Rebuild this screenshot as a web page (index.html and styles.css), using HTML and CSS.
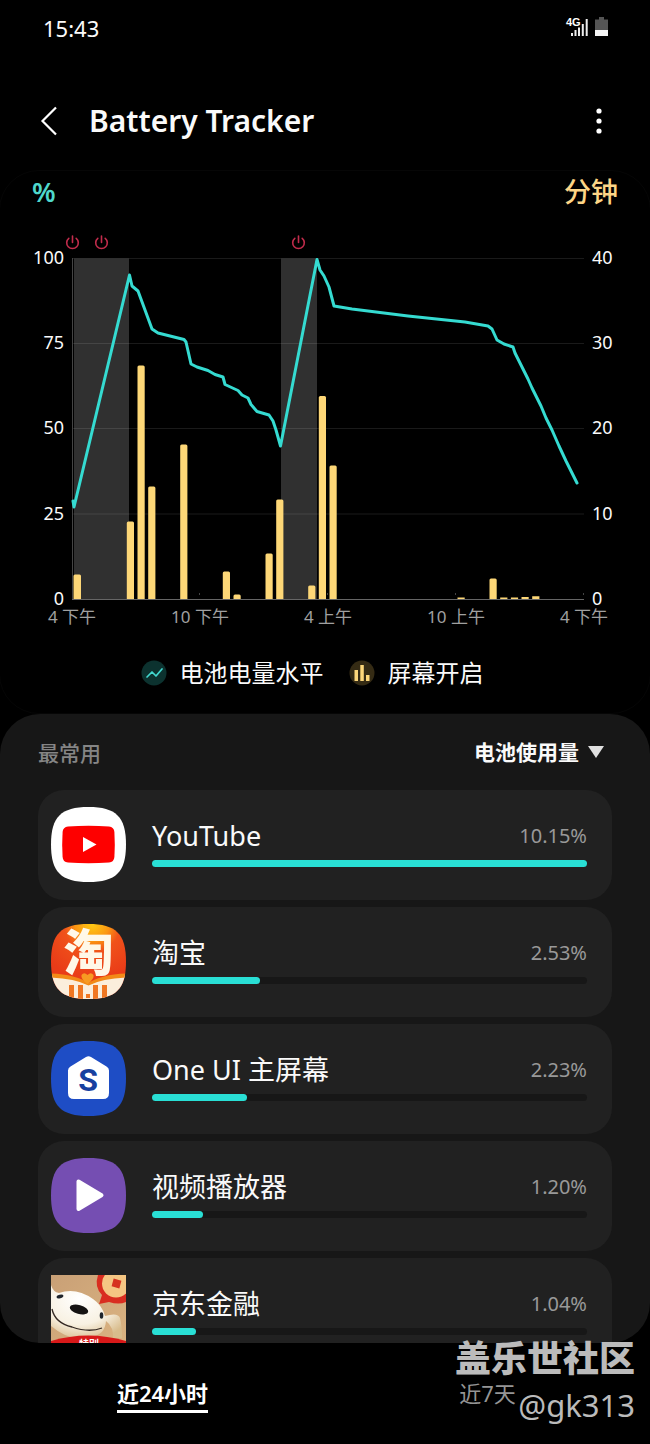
FILE: index.html
```html
<!DOCTYPE html>
<html lang="zh-CN">
<head>
<meta charset="utf-8">
<meta name="viewport" content="width=device-width, initial-scale=1">
<title>Battery Tracker</title>
<link rel="stylesheet" href="styles.css">
</head>
<body>
<div class="screen">
  <div class="status">
    <span>15:43</span>
    <svg class="status-icons" viewBox="0 0 44 24" role="img" aria-label="4G">
      <g fill="#eee"><path d="M6 20h2v-3H6zM9.500 20h2v-6h-2zM13 20h2V11.500h-2zM16.800 20h2V8h-2zM20.700 20h2V3h-2z"/></g>
      <text x="1" y="10" class="net">4G</text>
      <path d="M34 1h5v2.500h4V14H30V3.500h4z" fill="#555"/>
      <path d="M30 14h13v6H30z" fill="#f5f5f5"/>
    </svg>
  </div>

  <header class="header">
    <button class="icon-btn back" aria-label="返回"><svg viewBox="0 0 18 30"><path d="M16 1.500 2.500 15 16 28.500" fill="none" stroke="#fff" stroke-width="2.200"/></svg></button>
    <h1>Battery Tracker</h1>
    <button class="icon-btn more" aria-label="更多选项"><svg viewBox="0 0 6 28"><g fill="#fff"><circle cx="3" cy="4" r="2.600"/><circle cx="3" cy="14" r="2.600"/><circle cx="3" cy="24" r="2.600"/></g></svg></button>
  </header>

  <section class="chart-card">
    <div class="units"><span class="pct">%</span><span class="min">分钟</span></div>
    <svg class="chart" viewBox="0 0 650 410" role="img" aria-label="电池电量水平和屏幕开启">
      <defs>
        <g id="power" fill="none" stroke="#c22c4c" stroke-width="1.600" stroke-linecap="round"><path d="M-3.700-4.200A5.800 5.800 0 1 0 3.700-4.200M0-6.500V0"/></g>
      </defs>
      <path d="M74 38.500h55V379H74zM281 38.500h36V379h-36z" fill="#303030"/>
      <path d="M72 38.500h512M72 123.500h512M72 208.500h512M72 294h512" stroke="#fff" stroke-opacity=".1"/>
      <path d="M72.500 38v342" stroke="#444"/>
      <g class="axis-dots"><path d="M199 373h1v2h-1zM327 373h1v2h-1zM455 373h1v2h-1zM583 373h1v2h-1z"/></g>
      <g class="bars">
        <path d="M73.500 379V356q0-1.500 1.500-1.500h4.500q1.500 0 1.500 1.500v23z"/>
        <path d="M126.800 379V303q0-1.500 1.500-1.500h4.200q1.500 0 1.500 1.500v76z"/>
        <path d="M137.500 379V147q0-1.500 1.500-1.500h4.200q1.500 0 1.500 1.500v232z"/>
        <path d="M148.200 379V268q0-1.500 1.500-1.500h4.200q1.500 0 1.500 1.500v111z"/>
        <path d="M180.200 379V226q0-1.500 1.500-1.500h4.200q1.500 0 1.500 1.500v153z"/>
        <path d="M222.800 379V353q0-1.500 1.500-1.500h4.200q1.500 0 1.500 1.500v26z"/>
        <path d="M233.500 379V376q0-1.500 1.500-1.500h4.200q1.500 0 1.500 1.500v3z"/>
        <path d="M265.500 379V335q0-1.500 1.500-1.500h4.200q1.500 0 1.500 1.500v44z"/>
        <path d="M276.200 379V281q0-1.500 1.500-1.500h4.200q1.500 0 1.500 1.500v98z"/>
        <path d="M308.200 379V367q0-1.500 1.500-1.500h4.200q1.500 0 1.500 1.500v12z"/>
        <path d="M318.800 379V177.500q0-1.500 1.500-1.500h4.200q1.500 0 1.500 1.500V379z"/>
        <path d="M329.500 379V247q0-1.500 1.500-1.500h4.200q1.500 0 1.500 1.500v132z"/>
        <path d="M457.500 379v-1.500h7.200v1.500z"/>
        <path d="M489.500 379V360q0-1.500 1.500-1.500h4.200q1.500 0 1.500 1.500v19z"/>
        <path d="M500.200 379v-1.500h7.200v1.500zM510.900 379v-1.500h7.200v1.500zM521.500 379v-2h7.200v2zM532.200 379v-2.800h7.200v2.800z"/>
      </g>
      <path d="M72 379.500h512" stroke="#666"/>
      <polyline class="level" points="73,281 74,287 129.500,55 132,66 138,71 152,109 158,113 184,119.500 186,122 191,144 197,147 208,150.500 215,154.500 223,157 225,164.500 238,170.500 242,175 248,178 251,184.500 257,191.500 269,195 273,201 276,210 280.500,226 317,39.500 320,50 324,56 329,67 334,86 352,89 408,96 465,102 488,106 492,109 497,120 504,124 513,127 515,133 522,147 528,159 532,168 541,186 546,198 552,210 559,226 566,241 577,263"/>
      <use href="#power" x="72.500" y="22.500"/><use href="#power" x="101.500" y="22.500"/><use href="#power" x="298.500" y="22.500"/>
      <g class="scale end"><text x="64" y="44">100</text><text x="64" y="129">75</text><text x="64" y="214">50</text><text x="64" y="300">25</text><text x="64" y="385">0</text></g>
      <g class="scale"><text x="592" y="44">40</text><text x="592" y="129">30</text><text x="592" y="214">20</text><text x="592" y="300">10</text><text x="592" y="385">0</text></g>
      <g class="hours"><text x="72" y="403">4 下午</text><text x="200" y="403">10 下午</text><text x="328" y="403">4 上午</text><text x="456" y="403">10 上午</text><text x="584" y="403">4 下午</text></g>
    </svg>
    <ul class="legend">
      <li><svg viewBox="0 0 26 26"><circle cx="13" cy="13" r="12.500" fill="#0c322f"/><path d="m6 17 5-5 4 4 6-7" fill="none" stroke="#42d8cf" stroke-width="1.700" stroke-linecap="round" stroke-linejoin="round"/></svg>电池电量水平</li>
      <li><svg viewBox="0 0 26 26"><circle cx="13" cy="13" r="12.500" fill="#352b14"/><path d="M5.500 10H9v11H5.500zM11.300 5h3.500v16h-3.500zM17 15h3.500v6H17z" fill="#fdd77a"/></svg>屏幕开启</li>
    </ul>
  </section>

  <main class="usage">
    <div class="usage-head">
      <h2>最常用</h2>
      <label class="sort"><select aria-label="排序方式"><option>电池使用量</option></select><svg viewBox="0 0 16 12"><path d="M0 0h16L8 12z" fill="#e0e0e0"/></svg></label>
    </div>
    <ul class="apps">
      <li class="app">
        <svg class="app-icon" viewBox="0 0 75 75"><path d="M37.500 0C65 0 75 10 75 37.500S65 75 37.500 75 0 65 0 37.500 10 0 37.500 0Z" fill="#fff"/><path d="M17 19.500q20.500-1.500 41 0 5 .5 5.400 5.500.8 12.500 0 25-.4 5-5.400 5.500-20.500 1.500-41 0-5-.5-5.400-5.500-.8-12.500 0-25 .4-5 5.400-5.500Z" fill="#fe0000"/><path d="m32 30 13.500 7.500-13.500 7.500z" fill="#fff"/></svg>
        <div class="app-body"><div class="app-line"><span class="name">YouTube</span><span class="value">10.15%</span></div><div class="track"><div class="fill" style="width:100%"></div></div></div>
      </li>
      <li class="app">
        <svg class="app-icon" viewBox="0 0 75 75">
          <defs><clipPath id="sq"><path d="M37.500 0C65 0 75 10 75 37.500S65 75 37.500 75 0 65 0 37.500 10 0 37.500 0Z"/></clipPath>
          <radialGradient id="tb" cx=".55" cy="0" r=".75"><stop offset="0" stop-color="#ffcb13"/><stop offset=".3" stop-color="#fb9612"/><stop offset=".5" stop-color="#f0521a"/><stop offset="1" stop-color="#e93b18"/></radialGradient></defs>
          <g clip-path="url(#sq)"><path d="M0 0h75v75H0z" fill="url(#tb)"/><path d="M0 51q24 3 37.500 10Q51 54 75 51v24H0z" fill="#fbeedc"/><path d="M0 49.500q25 1 37.500 9.500Q50 50.500 75 49.500v4q-24 1-37.500 8Q24 54.500 0 53.500z" fill="#f28a17"/>
          <path d="M18 61h5v14h-5zM27 61h5v14h-5zM42 61h5v14h-5zM51 61h5v14h-5zM35 70h4v4h-4z" fill="#f07722"/></g>
          <text x="37.500" y="47" class="tao">淘</text>
          <path d="M36.500 60q-7-5-6-9 2.500-3.500 6 0 3.500-3.500 6 0 1 4-6 9z" fill="#f79a22"/>
        </svg>
        <div class="app-body"><div class="app-line"><span class="name">淘宝</span><span class="value">2.53%</span></div><div class="track"><div class="fill" style="width:24.900%"></div></div></div>
      </li>
      <li class="app">
        <svg class="app-icon" viewBox="0 0 75 75"><path d="M37.500 0C65 0 75 10 75 37.500S65 75 37.500 75 0 65 0 37.500 10 0 37.500 0Z" fill="#1e4dc5"/><path d="M35 16q2.500-1.500 5 0l15.500 9.500q2.500 1.500 2.500 4V52q0 6-6 6H23q-6 0-6-6V29.500q0-2.500 2.500-4z" fill="#fff"/><text x="37" y="50" class="s-mark">S</text></svg>
        <div class="app-body"><div class="app-line"><span class="name">One UI 主屏幕</span><span class="value">2.23%</span></div><div class="track"><div class="fill" style="width:21.900%"></div></div></div>
      </li>
      <li class="app">
        <svg class="app-icon" viewBox="0 0 75 75"><path d="M37.500 0C65 0 75 10 75 37.500S65 75 37.500 75 0 65 0 37.500 10 0 37.500 0Z" fill="#754eb2"/><path d="M27.500 23.500v27.500l23-13.700z" fill="#fff" stroke="#fff" stroke-width="4" stroke-linejoin="round"/></svg>
        <div class="app-body"><div class="app-line"><span class="name">视频播放器</span><span class="value">1.20%</span></div><div class="track"><div class="fill" style="width:11.800%"></div></div></div>
      </li>
      <li class="app">
        <svg class="app-icon" viewBox="0 0 75 75">
          <defs><clipPath id="jd"><path d="M0 0h75v75H0z"/></clipPath>
          <linearGradient id="tan" x2="1" y2="1"><stop offset="0" stop-color="#c9a076"/><stop offset="1" stop-color="#dbb482"/></linearGradient>
          <radialGradient id="face" cx=".4" cy=".25" r=".8"><stop offset="0" stop-color="#fff"/><stop offset=".6" stop-color="#f8f1e2"/><stop offset="1" stop-color="#d8bc8c"/></radialGradient></defs>
          <g clip-path="url(#jd)"><path d="M0 0h75v75H0z" fill="url(#tan)"/>
          <path d="M47 0Q43 12 51 20l-3 9 10-2q10 3 17 0V0z" fill="#d92d20"/><circle cx="65" cy="8.500" r="14" fill="#f5c683"/><path d="M61.500 4.500h8v8h-8z" transform="rotate(15 65.500 8.500)" fill="#d63220"/>
          <path d="M0 10Q2 17 8 18 25 12 42 24q9 6 12 17 13-4 15 2 2 8 2 20l-9 1q1-12-7-18-1 14-15 16Q20 68 0 51z" fill="url(#face)"/>
          <ellipse cx="28" cy="34.500" rx="9.500" ry="4.500" transform="rotate(15 28 34.500)" fill="#151313"/><ellipse cx="9" cy="21.500" rx="3.500" ry="1.800" transform="rotate(-15 9 21.500)" fill="#20252c"/><ellipse cx="50.500" cy="40.500" rx="1.800" ry="3.200" fill="#20252c"/>
          <path d="M1 34q3 14 20 18 17 6 30 1" fill="none" stroke="#352a24" stroke-width="1.300"/>
          <path d="M0 66q37-11 75 0v9H0z" fill="#d81919"/></g>
          <text x="38" y="73" class="jd-mark">特别</text>
        </svg>
        <div class="app-body"><div class="app-line"><span class="name">京东金融</span><span class="value">1.04%</span></div><div class="track"><div class="fill" style="width:10.200%"></div></div></div>
      </li>
    </ul>
  </main>

  <nav class="tabs">
    <div><button class="tab active">近24小时</button></div>
    <div><button class="tab">近7天</button></div>
  </nav>
  <div class="watermark"><strong>盖乐世社区</strong><span>@gk313</span></div>
</div>
</body>
</html>
```
FILE: styles.css
```css
* { box-sizing: border-box; }
body {
  margin: 0;
  background: #000;
  color: #fafafa;
  font-family: "Noto Sans", "Noto Sans CJK SC", sans-serif;
}
h1, h2, ul { margin: 0; padding: 0; font: inherit; list-style: none; }
button, select {
  appearance: none;
  border: 0;
  padding: 0;
  background: none;
  color: inherit;
  font: inherit;
}
svg { display: block; }
.screen {
  position: relative;
  display: flex;
  flex-direction: column;
  height: 100vh;
  overflow: hidden;
}
.status {
  display: flex;
  justify-content: space-between;
  align-items: center;
  height: 56px;
  padding: 0 41px 0 43px;
  font-size: 22px;
}
.status-icons { width: 44px; height: 24px; }
.net { fill: #fff; font: bold 11px "Liberation Sans", sans-serif; }
.header {
  display: flex;
  align-items: center;
  height: 114px;
  padding: 16px 48px 0 40px;
}
.header h1 { flex: 1; font-size: 30px; font-weight: 600; line-height: 40px; }
.icon-btn { display: flex; align-items: center; height: 44px; }
.back { width: 49px; }
.back svg { width: 18px; height: 30px; }
.more svg { width: 6px; height: 28px; }
.chart-card {
  border: 1px solid #060606;
  border-radius: 40px;
  height: 544px;
  flex: none;
  margin: 0 -1px;
}
.units {
  display: flex;
  justify-content: space-between;
  align-items: center;
  height: 49px;
  padding: 0 32px 8px;
  font-size: 27px;
  font-weight: 500;
  line-height: 40px;
}
.pct { color: #4fd8cc; font-weight: 600; }
.min { color: #fdd586; }
.chart { width: 100%; height: auto; }
.bars { fill: #fdd777; }
.axis-dots { fill: #444; }
.level { fill: none; stroke: #35dbd1; stroke-width: 3; stroke-linejoin: round; stroke-linecap: round; }
.scale { fill: #fafafa; font-size: 18px; }
.end { text-anchor: end; }
.hours { fill: #a0a0a0; font-size: 17px; text-anchor: middle; }
.legend {
  display: flex;
  justify-content: center;
  gap: 25px;
  padding: 25px 26px 0 0;
  font-size: 24px;
  line-height: 36px;
}
.legend li { display: flex; align-items: center; gap: 13px; }
.legend svg { width: 26px; height: 26px; }
.usage {
  flex: 1;
  min-height: 0;
  overflow: hidden;
  padding: 0 38px;
  border-radius: 40px;
  background: #171717;
}
.usage-head {
  display: flex;
  justify-content: space-between;
  align-items: center;
  height: 76px;
  padding-right: 8px;
  font-size: 21px;
}
.usage-head h2 { color: #858585; font-weight: 500; }
.sort { display: flex; align-items: center; gap: 9px; font-weight: 700; }
.sort svg { width: 16px; height: 12px; }
.apps { display: grid; gap: 7px; }
.app {
  display: flex;
  align-items: center;
  gap: 26px;
  height: 110px;
  padding: 0 25px 2px 13px;
  border-radius: 26px;
  background: #212121;
}
.app-icon { flex: none; width: 75px; height: 75px; }
.app-body { flex: 1; padding-bottom: 6px; }
.app-line {
  display: flex;
  justify-content: space-between;
  align-items: center;
  height: 40px;
  margin-bottom: 4px;
}
.name { font-size: 27px; line-height: 40px; }
.value { color: #999; font-size: 20px; line-height: 40px; }
.track { height: 7px; border-radius: 4px; background: #171717; }
.fill { height: 100%; border-radius: 4px; background: #29dfd5; }
.tao { fill: #fff8e8; font: 900 50px "Noto Sans CJK SC", sans-serif; text-anchor: middle; }
.s-mark { fill: #17409f; font: bold 32px Roboto, sans-serif; text-anchor: middle; }
.jd-mark { fill: #fff; font: bold 10px "Noto Sans CJK SC", sans-serif; text-anchor: middle; }
.tabs { display: grid; grid-template-columns: 1fr 1fr; height: 101px; padding-top: 34px; text-align: center; }
.tab {
  height: 36px;
  border-bottom: 3px solid transparent;
  color: #959595;
  font-size: 22px;
  line-height: 33px;
}
.active { border-color: #fff; color: #fff; font-weight: 600; }
.watermark {
  position: absolute;
  right: 15px;
  bottom: 16px;
  display: flex;
  flex-direction: column;
  align-items: flex-end;
  color: #bbb;
  font-size: 31px;
  line-height: 46px;
  pointer-events: none;
}
.watermark strong { font-size: 36px; font-weight: 900; }
```
